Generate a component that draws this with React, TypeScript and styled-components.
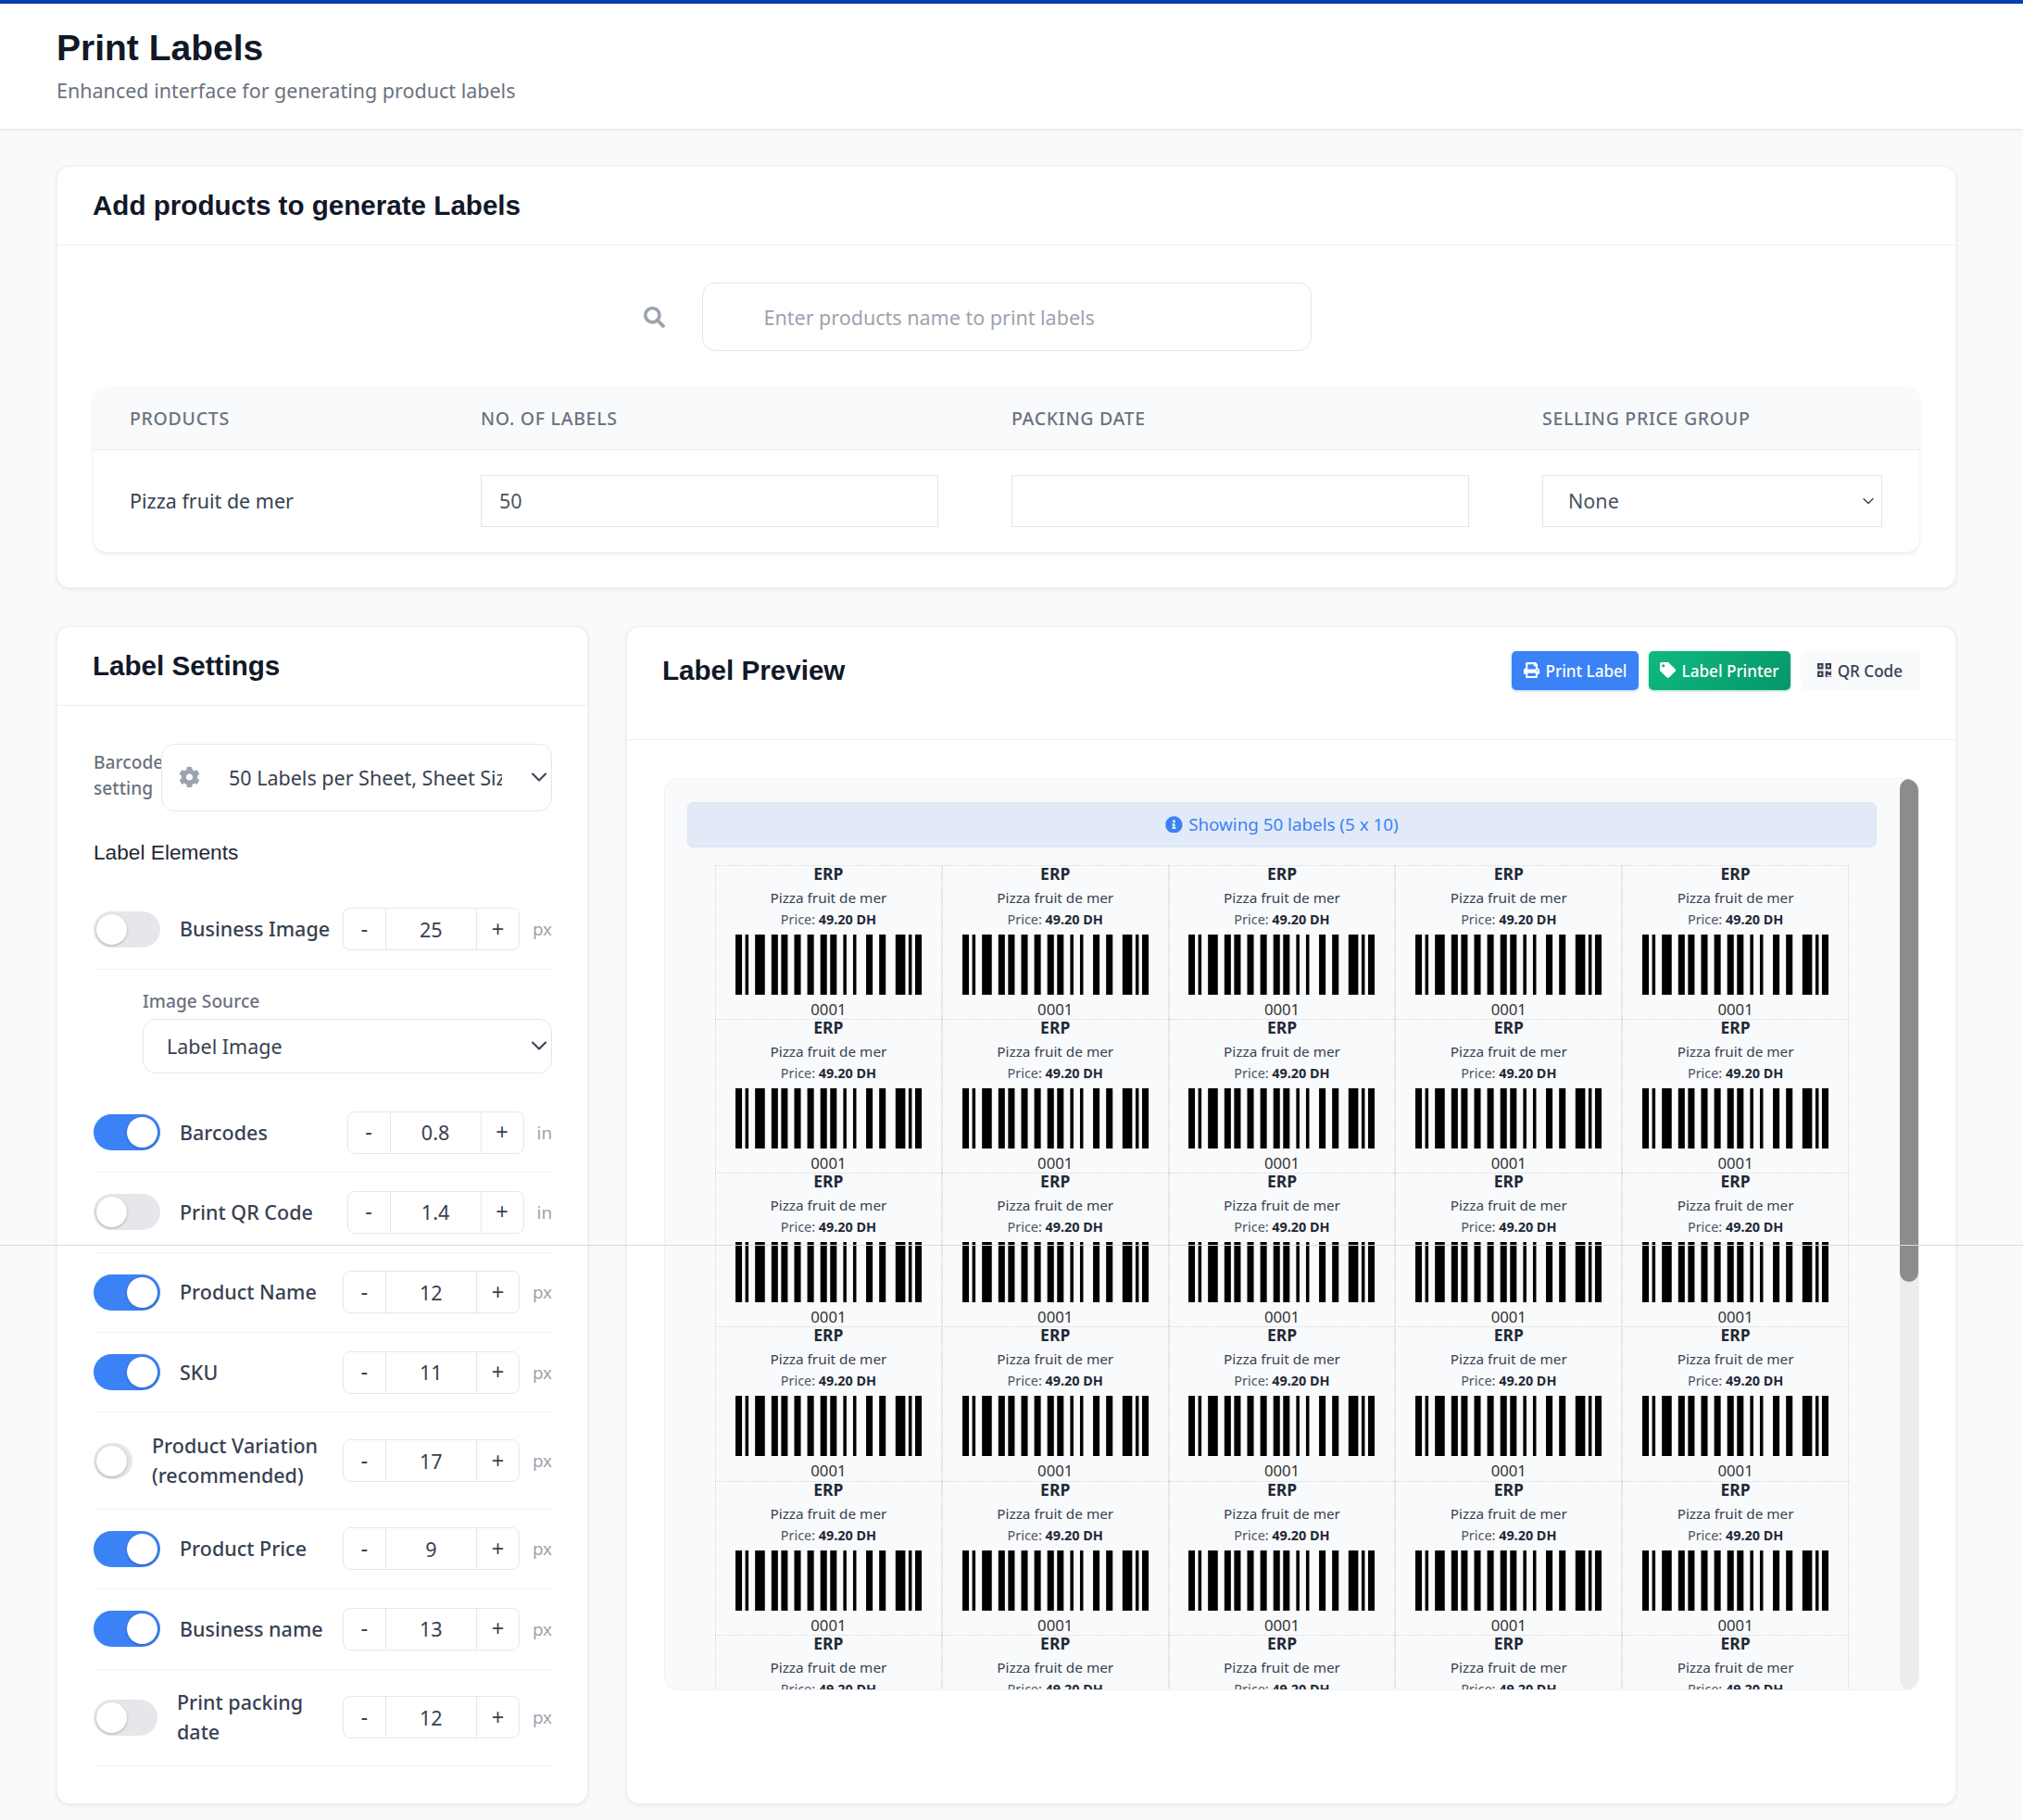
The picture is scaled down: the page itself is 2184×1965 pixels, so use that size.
import { FC } from "react";
import styled, { createGlobalStyle } from "styled-components";
import { FaCog, FaInfoCircle, FaPrint, FaQrcode, FaSearch, FaTag } from "react-icons/fa";
import { ChevronDown } from "lucide-react";

const UI_FONT = `"Noto Sans", "Open Sans", sans-serif`;
const HEAD_FONT = `"Liberation Sans", Arial, sans-serif`;

const GlobalStyle = createGlobalStyle`
  * { box-sizing: border-box; }
  body { margin: 0; background: #f9fafb; font-family: ${UI_FONT}; color: #374151; }
`;

const BARS = [
  [0, 2], [3, 4], [6, 9], [11, 13], [14, 16], [18, 20], [22, 24], [26, 28],
  [29, 31], [33, 34], [36, 37], [40, 42], [44, 46], [49, 52], [53, 54], [55, 57],
];

const Barcode: FC = () => (
  <BarcodeSvg viewBox="0 0 57 65" preserveAspectRatio="none">
    {BARS.map(([a, b]) => (
      <rect key={a} x={a} y={0} width={b - a} height={65} fill="#000" />
    ))}
  </BarcodeSvg>
);

const Label: FC = () => (
  <LabelCell>
    <LabelBrand>ERP</LabelBrand>
    <LabelName>Pizza fruit de mer</LabelName>
    <LabelPrice>
      Price: <b>49.20 DH</b>
    </LabelPrice>
    <Barcode />
    <LabelSku>0001</LabelSku>
  </LabelCell>
);

interface SettingProps {
  on?: boolean;
  toggleWidth?: number;
  label: React.ReactNode;
  value: string;
  unit: string;
}

const Setting: FC<SettingProps> = ({ on, toggleWidth = 72, label, value, unit }) => (
  <SettingRow>
    <Toggle $on={!!on} $width={toggleWidth} />
    <SettingName>{label}</SettingName>
    <Stepper>
      <StepButton>-</StepButton>
      <StepInput defaultValue={value} />
      <StepButton>+</StepButton>
    </Stepper>
    <Unit>{unit}</Unit>
  </SettingRow>
);

const App: FC = () => {
  const labels = Array.from({ length: 50 }, (_, i) => i);

  return (
    <Page>
      <GlobalStyle />
      <Seam />
      <TopHeader>
        <PageTitle>Print Labels</PageTitle>
        <PageSubtitle>Enhanced interface for generating product labels</PageSubtitle>
      </TopHeader>

      <Main>
        <Card>
          <CardHead>
            <CardTitle>Add products to generate Labels</CardTitle>
          </CardHead>
          <ProductsBody>
            <SearchRow>
              <SearchIcon>
                <FaSearch />
              </SearchIcon>
              <SearchInput placeholder="Enter products name to print labels" />
            </SearchRow>
            <ProductTable>
              <TableHead>
                <span>Products</span>
                <span>No. of Labels</span>
                <span>Packing Date</span>
                <span>Selling Price Group</span>
              </TableHead>
              <TableRow>
                <span>Pizza fruit de mer</span>
                <TableInput defaultValue="50" />
                <TableInput />
                <TableSelectWrap>
                  <TableSelect defaultValue="None">
                    <option>None</option>
                  </TableSelect>
                  <Chevron $right={5}>
                    <ChevronDown size={20} strokeWidth={1.6} />
                  </Chevron>
                </TableSelectWrap>
              </TableRow>
            </ProductTable>
          </ProductsBody>
        </Card>

        <Columns>
          <Card>
            <CardHead>
              <CardTitle>Label Settings</CardTitle>
            </CardHead>
            <SettingsBody>
              <BarcodeSetting>
                <SmallLabel>
                  Barcode
                  <br />
                  setting
                </SmallLabel>
                <SelectWrap $grow>
                  <GearIcon>
                    <FaCog />
                  </GearIcon>
                  <RoundSelect $left={72} $height={73} defaultValue="a">
                    <option value="a">50 Labels per Sheet, Sheet Size: 8.5in x 11in, Label Size: 1.5in x 1in</option>
                  </RoundSelect>
                  <Chevron $right={0}>
                    <ChevronDown size={28} strokeWidth={1.8} />
                  </Chevron>
                </SelectWrap>
              </BarcodeSetting>
              <ElementsTitle>Label Elements</ElementsTitle>

              <ElementList>
                <Setting label="Business Image" value="25" unit="px" />
                <ImageSource>
                  <SourceLabel>Image Source</SourceLabel>
                  <SelectWrap>
                    <RoundSelect $left={25} $height={59} defaultValue="Label Image">
                      <option>Label Image</option>
                    </RoundSelect>
                    <Chevron $right={0}>
                      <ChevronDown size={28} strokeWidth={1.8} />
                    </Chevron>
                  </SelectWrap>
                </ImageSource>
                <Setting on label="Barcodes" value="0.8" unit="in" />
                <Setting label="Print QR Code" value="1.4" unit="in" />
                <Setting on label="Product Name" value="12" unit="px" />
                <Setting on label="SKU" value="11" unit="px" />
                <Setting
                  toggleWidth={42}
                  label={
                    <>
                      Product Variation
                      <br />
                      (recommended)
                    </>
                  }
                  value="17"
                  unit="px"
                />
                <Setting on label="Product Price" value="9" unit="px" />
                <Setting on label="Business name" value="13" unit="px" />
                <Setting
                  toggleWidth={69}
                  label={
                    <>
                      Print packing
                      <br />
                      date
                    </>
                  }
                  value="12"
                  unit="px"
                />
              </ElementList>
            </SettingsBody>
          </Card>

          <Card>
            <PreviewHead>
              <CardTitle>Label Preview</CardTitle>
              <ButtonGroup>
                <ActionButton $kind="blue">
                  <FaPrint /> Print Label
                </ActionButton>
                <ActionButton $kind="green">
                  <FaTag /> Label Printer
                </ActionButton>
                <ActionButton $kind="plain">
                  <FaQrcode /> QR Code
                </ActionButton>
              </ButtonGroup>
            </PreviewHead>
            <PreviewBody>
              <PreviewBox>
                <InfoAlert>
                  <FaInfoCircle /> Showing 50 labels (5 x 10)
                </InfoAlert>
                <LabelGrid>
                  {labels.map((i) => (
                    <Label key={i} />
                  ))}
                </LabelGrid>
                <ScrollTrack>
                  <ScrollThumb />
                </ScrollTrack>
              </PreviewBox>
            </PreviewBody>
          </Card>
        </Columns>
      </Main>
    </Page>
  );
};

const Page = styled.div`
  position: relative;
  min-height: 1965px;
  overflow: hidden;
`;

const Seam = styled.div`
  position: absolute;
  left: 0;
  right: 0;
  top: 1344px;
  height: 1px;
  background: #d9dbdd;
  z-index: 5;
`;

const TopHeader = styled.header`
  height: 139px;
  padding: 26px 61px 0;
  background: #fff;
  border-top: 4px solid #0b3fae;
  box-shadow: 0 1px 4px rgba(0, 0, 0, 0.1);
`;

const PageTitle = styled.h1`
  margin: 0;
  font: 700 39px/44px ${HEAD_FONT};
  color: #111827;
`;

const PageSubtitle = styled.p`
  margin: 9px 0 0;
  font-size: 21.5px;
  line-height: 30px;
  color: #6b7280;
`;

const Main = styled.main`
  padding: 40px 72px 16px 61px;
`;

const Card = styled.section`
  background: #fff;
  border: 1px solid #f0f1f3;
  border-radius: 14px;
  box-shadow: 0 1px 4px rgba(0, 0, 0, 0.09);
`;

const CardHead = styled.div`
  height: 85px;
  padding: 0 38px;
  display: flex;
  align-items: center;
  border-bottom: 1px solid #eceef1;
`;

const CardTitle = styled.h2`
  margin: 0;
  font: 700 29.6px/36px ${HEAD_FONT};
  color: #111827;
`;

const ProductsBody = styled.div`
  padding: 40px 39px 38px;
`;

const SearchRow = styled.div`
  display: flex;
  align-items: center;
  justify-content: center;
  gap: 40px;
  padding-right: 63px;
  margin-bottom: 39px;
`;

const SearchIcon = styled.span`
  display: flex;
  font-size: 23px;
  color: #9ca3af;
`;

const SearchInput = styled.input`
  width: 658px;
  height: 74px;
  padding: 0 66px;
  border: 1.5px solid #e5e7eb;
  border-radius: 14px;
  font: 21.5px ${UI_FONT};
  color: #374151;
  outline: none;
  &::placeholder {
    color: #9ca3af;
  }
`;

const ProductTable = styled.div`
  border-radius: 14px;
  background: #fff;
  box-shadow: 0 2px 5px rgba(0, 0, 0, 0.09);
  overflow: hidden;
`;

const TableHead = styled.div`
  display: grid;
  grid-template-columns: 379px 573px 573px 1fr;
  align-items: center;
  height: 68px;
  padding-left: 39px;
  background: #f9fafb;
  border-bottom: 1px solid #e8eaed;
  font-size: 19.5px;
  font-weight: 500;
  letter-spacing: 0.7px;
  text-transform: uppercase;
  color: #6b7280;
`;

const TableRow = styled.div`
  display: grid;
  grid-template-columns: 379px 573px 573px 1fr;
  align-items: center;
  height: 109.5px;
  padding-left: 39px;
  font-size: 21.5px;
  color: #374151;
`;

const TableInput = styled.input`
  width: 494px;
  height: 56px;
  padding: 0 19px;
  border: 1.5px solid #e2e4e8;
  font: 21.5px ${UI_FONT};
  color: #4b5563;
  outline: none;
`;

const SelectWrap = styled.div<{ $grow?: boolean }>`
  position: relative;
  flex: ${(p) => (p.$grow ? 1 : "none")};
`;

const TableSelectWrap = styled(SelectWrap)`
  width: 367px;
`;

const TableSelect = styled.select`
  display: block;
  appearance: none;
  width: 100%;
  height: 56px;
  padding: 0 40px 0 27px;
  background: #fff;
  border: 1.5px solid #e2e4e8;
  border-radius: 0;
  font: 21.5px ${UI_FONT};
  color: #4b5563;
  outline: none;
`;

const RoundSelect = styled.select<{ $left: number; $height: number }>`
  display: block;
  appearance: none;
  width: 100%;
  height: ${(p) => p.$height}px;
  padding: 0 53px 0 ${(p) => p.$left}px;
  background: #fff;
  border: 1.5px solid #e5e7eb;
  border-radius: 14px;
  font: 21.5px ${UI_FONT};
  color: #374151;
  outline: none;
`;

const Chevron = styled.span<{ $right: number }>`
  position: absolute;
  top: 50%;
  right: ${(p) => p.$right}px;
  transform: translateY(-50%);
  display: flex;
  color: #374151;
  pointer-events: none;
`;

const GearIcon = styled.span`
  position: absolute;
  left: 19px;
  top: 50%;
  transform: translateY(-50%);
  display: flex;
  font-size: 23px;
  color: #9ca3af;
  z-index: 1;
`;

const Columns = styled.div`
  display: grid;
  grid-template-columns: 574px 1fr;
  gap: 41px;
  margin-top: 41px;
`;

const SettingsBody = styled.div`
  padding: 41px 38px 40px 39px;
`;

const BarcodeSetting = styled.div`
  display: flex;
  align-items: center;
`;

const SmallLabel = styled.div`
  width: 73px;
  flex: none;
  white-space: nowrap;
  padding-bottom: 4px;
  font-size: 19.2px;
  line-height: 28px;
  font-weight: 500;
  color: #6b7280;
`;

const ElementsTitle = styled.h3`
  margin: 28px 0 24px;
  font: 400 22.7px/33px ${HEAD_FONT};
  color: #1f2937;
`;

const ElementList = styled.div``;

const SettingRow = styled.div`
  display: flex;
  align-items: center;
  padding: 19.7px 0;
  border-bottom: 1px solid #f1f2f4;
`;

const Toggle = styled.span<{ $on: boolean; $width: number }>`
  position: relative;
  flex: none;
  width: ${(p) => p.$width}px;
  height: 39px;
  border-radius: 20px;
  background: ${(p) => (p.$on ? "#3b82f6" : "#e5e7eb")};
  &::after {
    content: "";
    position: absolute;
    top: 3px;
    left: ${(p) => (p.$on ? p.$width - 36 : 3)}px;
    width: 33px;
    height: 33px;
    border-radius: 50%;
    background: #fff;
    box-shadow: 0 1px 3px rgba(0, 0, 0, 0.25);
  }
`;

const SettingName = styled.span`
  margin-left: 21px;
  white-space: nowrap;
  font-size: 21.5px;
  line-height: 32px;
  font-weight: 500;
  color: #374151;
`;

const Stepper = styled.div`
  margin-left: auto;
  flex: none;
  display: flex;
  width: 191px;
  height: 46px;
  border: 1.5px solid #e5e7eb;
  border-radius: 8px;
  overflow: hidden;
`;

const StepButton = styled.span`
  width: 45px;
  flex: none;
  display: flex;
  align-items: center;
  justify-content: center;
  font: 23px ${HEAD_FONT};
  color: #374151;
`;

const StepInput = styled.input`
  flex: 1;
  min-width: 0;
  border: none;
  border-left: 1.5px solid #e5e7eb;
  border-right: 1.5px solid #e5e7eb;
  text-align: center;
  font: 21.5px ${UI_FONT};
  color: #374151;
  outline: none;
`;

const Unit = styled.span`
  margin-left: 14px;
  font-size: 18.8px;
  color: #9ca3af;
`;

const ImageSource = styled.div`
  padding-left: 53px;
  margin: 20px 0 21px;
`;

const SourceLabel = styled.div`
  font-size: 19.2px;
  line-height: 28px;
  font-weight: 500;
  color: #6b7280;
  margin-bottom: 5px;
`;

const PreviewHead = styled.div`
  height: 122px;
  padding: 26px 38px 0;
  display: flex;
  align-items: flex-start;
  justify-content: space-between;
  border-bottom: 1px solid #eceef1;
  ${CardTitle} {
    line-height: 42px;
  }
`;

const ButtonGroup = styled.div`
  display: flex;
  gap: 11px;
`;

const KIND = {
  blue: "padding: 1px 13px 0; background: #3b82f6; color: #fff; box-shadow: 0 1px 3px rgba(59,130,246,0.4);",
  green: "padding: 1px 12px 0; background: linear-gradient(135deg, #10b981, #059669); color: #fff; box-shadow: 0 1px 3px rgba(5,150,105,0.4);",
  plain: "padding: 1px 19px 0 17px; background: #f9fafb; color: #374151;",
};

const ActionButton = styled.button<{ $kind: keyof typeof KIND }>`
  height: 42px;
  display: inline-flex;
  align-items: center;
  gap: 6px;
  border: none;
  border-radius: 5px;
  font: 500 17.1px ${UI_FONT};
  ${(p) => KIND[p.$kind]}
`;

const PreviewBody = styled.div`
  padding: 41px 39px 0 40px;
`;

const PreviewBox = styled.div`
  position: relative;
  height: 985px;
  padding: 25px 45px 0 24px;
  background: #f9fafb;
  border: 1px solid #f0f1f3;
  border-radius: 14px;
  overflow: hidden;
`;

const ScrollTrack = styled.div`
  position: absolute;
  top: 0;
  right: 0;
  bottom: 0;
  width: 20px;
  background: #ececec;
  border-radius: 10px;
`;

const ScrollThumb = styled.div`
  height: 543px;
  background: #8c8c8c;
  border-radius: 10px;
`;

const InfoAlert = styled.div`
  height: 49px;
  display: flex;
  align-items: center;
  justify-content: center;
  gap: 6px;
  background: #e2eaf8;
  border: 1px solid #dbe4f5;
  border-radius: 6px;
  font-size: 18.8px;
  color: #3b82f6;
`;

const LabelGrid = styled.div`
  width: 1224px;
  margin: 19px auto 0;
  display: grid;
  grid-template-columns: repeat(5, 1fr);
  grid-auto-rows: 166.3px;
`;

const LabelCell = styled.div`
  display: flex;
  flex-direction: column;
  align-items: center;
  border: 1px dotted #d5d7da;
  border-width: 1px 1px 0 1px;
  text-align: center;
  color: #374151;
`;

const LabelBrand = styled.div`
  height: 20px;
  font-size: 17.5px;
  line-height: 16px;
  font-weight: 700;
  color: #1f2937;
`;

const LabelName = styled.div`
  height: 31px;
  font-size: 15.3px;
  line-height: 29px;
`;

const LabelPrice = styled.div`
  height: 17px;
  font-size: 14.4px;
  line-height: 14px;
  color: #4b5563;
  b {
    color: #1f2937;
  }
`;

const BarcodeSvg = styled.svg`
  display: block;
  flex: none;
  width: 201px;
  height: 65px;
  margin-top: 6px;
`;

const LabelSku = styled.div`
  height: 20px;
  margin-top: 6px;
  font-size: 16.7px;
  line-height: 20px;
  color: #333;
`;

export default App;
